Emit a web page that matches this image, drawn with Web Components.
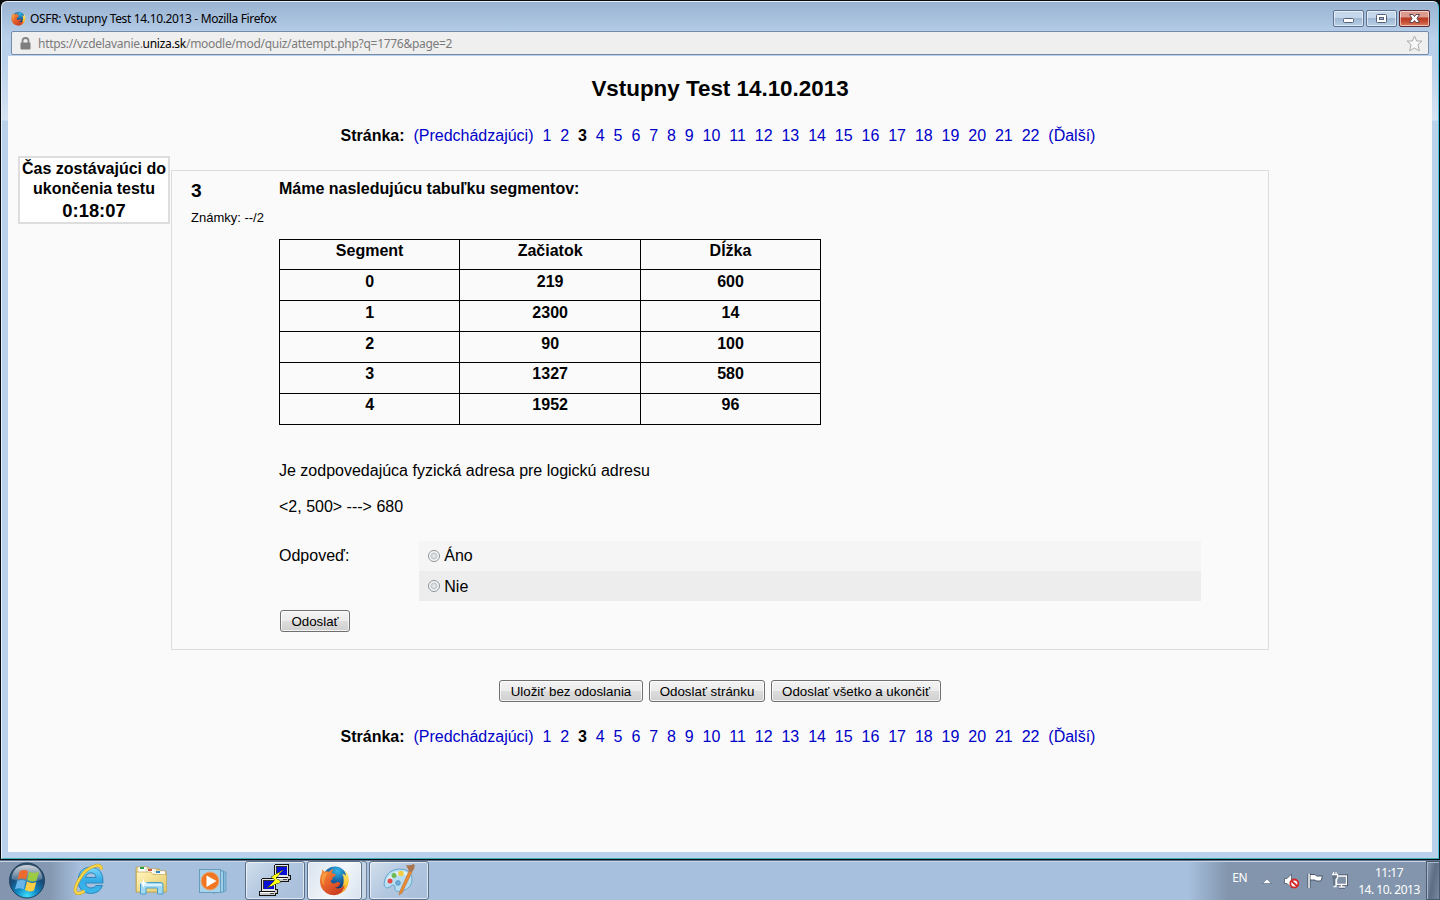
<!DOCTYPE html>
<html lang="sk">
<head>
<meta charset="utf-8">
<title>OSFR: Vstupny Test 14.10.2013</title>
<style>
html,body{margin:0;height:100%;overflow:hidden;background:#0a0d10;font-family:"Liberation Sans",Arial,sans-serif;font-size:16px;color:#000}
</style>
</head>
<body>
<desktop-shell></desktop-shell>
<script>
const define = (name, html) => customElements.define(name, class extends HTMLElement {
  constructor() {
    super();
    this.attachShadow({mode: 'open'});
  }
  connectedCallback() {
    this.shadowRoot.innerHTML = typeof html === 'function' ? html(this) : html;
  }
});

const firefox = (id) => `<svg viewBox="0 0 32 32"><defs>
<radialGradient id="${id}g" cx=".6" cy=".2" r=".8"><stop offset="0" stop-color="#35b5e8"/><stop offset=".5" stop-color="#1769a8"/><stop offset="1" stop-color="#0b2f66"/></radialGradient>
<linearGradient id="${id}f" x1="0" y1="0" x2=".7" y2="1"><stop offset="0" stop-color="#f5953a"/><stop offset=".5" stop-color="#e8642c"/><stop offset="1" stop-color="#c93a22"/></linearGradient>
<linearGradient id="${id}y" x1="0" y1="0" x2="0" y2="1"><stop offset="0" stop-color="#fff27c"/><stop offset=".6" stop-color="#f8c331"/><stop offset="1" stop-color="#e77b24"/></linearGradient></defs>
<circle cx="16.500" cy="13.500" r="12" fill="url(#${id}g)"/>
<path d="M26.500 4.500Q31 10 30.800 17Q29.500 28 18 31Q25 25 25.500 17Q26 12 24 9Q27 10 27.500 11Q28 8 26.500 4.500Z" fill="url(#${id}y)"/>
<path d="M3.300 4.500Q4.500 6 5.500 7Q8 6 10.500 7Q12.500 4.500 15 4.200Q13 6.500 13.300 8.500L17.500 9.500Q17.500 11.500 14 12.800L14 15Q12 15 12 17Q14 20 17 18.500Q20 16.500 22 18.800Q21 23 16.500 23.500Q22 26 26.500 21Q24.500 30.500 16 31.300Q6 31 2 22.500Q-.5 14 3 8Z" fill="url(#${id}f)"/>
<path d="M3 12Q4 7 10 8Q7 9 7 12Q4 17 6 22Q2 18 3 12Z" fill="#f8ad47" opacity=".65"/></svg>`;

define('caption-button', el => `<style>
:host{display:flex;box-sizing:border-box;width:31px;height:17px;border:1px solid #5d7291;border-radius:2px;box-shadow:inset 0 0 0 1px rgba(255,255,255,.55);background:linear-gradient(#c5d7eb 0 43%,#9fb7d2 47%,#b6cee7);justify-content:center}
:host([kind=close]){border-color:#5d2732;background:linear-gradient(#dc9a8e 0 40%,#b83a24 46%,#c44a30 70%,#dc8060)}
svg{width:29px;height:15px;display:block}
</style><svg viewBox="0 0 29 15">${{
min:'<rect x="9.500" y="7.500" width="10" height="4" rx="1" fill="#fff" stroke="#535f72"/>',
max:'<rect x="9.500" y="3.500" width="10" height="8" rx="1" fill="#fff" stroke="#535f72"/><rect x="12.500" y="6.500" width="4" height="2" fill="#a9bdd5" stroke="#535f72"/>',
close:'<path d="M9.500 3.500H13L14.500 5.500L16 3.500H19.500L17 7.500L19.500 11.500H16L14.500 9.500L13 11.500H9.500L12 7.500Z" fill="#fff" stroke="#5a4650"/>'
}[el.getAttribute('kind')]}</svg>`);

define('title-bar', `<style>
:host{display:flex;height:29px;align-items:flex-start;box-sizing:border-box;padding:8px 8px 0 9px}
.ico{width:15px;height:15px;margin-top:1px}.ico svg{display:block}
.t{flex:1;margin-left:4px;font:12px/18px "Noto Sans","Open Sans",sans-serif;letter-spacing:-.35px;white-space:pre}
.b{display:flex;gap:2px}
</style><div class="ico">${firefox('a')}</div><div class="t">OSFR: Vstupny Test 14.10.2013 - Mozilla Firefox</div>
<div class="b"><caption-button kind="min"></caption-button><caption-button kind="max"></caption-button><caption-button kind="close"></caption-button></div>`);

define('address-bar', `<style>
:host{display:flex;align-items:center;box-sizing:border-box;height:24px;margin:0 9px;border:1px solid #748baa;border-radius:2px;background:#efefef;padding:0 5px 0 8px;font:12px/20px "Noto Sans","Open Sans",sans-serif;color:#7b7b7b;letter-spacing:-.29px}
b{font-weight:400;color:#000}.u{flex:1;margin-left:7px;padding-top:2px;white-space:pre}
svg{display:block}
</style>
<svg width="11" height="13" viewBox="0 0 11 13"><path d="M2.500 7V4Q2.500 1 5.500 1T8.500 4V7" fill="none" stroke="#858585" stroke-width="1.800"/><rect x=".5" y="5.500" width="10" height="7" rx="1" fill="#7e7e7e"/></svg>
<div class="u">https://vzdelavanie.<b>uniza.sk</b>/moodle/mod/quiz/attempt.php?q=1776&amp;page=2</div>
<svg width="17" height="17" viewBox="0 0 17 17"><path d="M8.500 1L10.700 6H16L12 9.700L13.300 15.800L8.500 13L3.700 15.800L5 9.700L1 6H6.300Z" fill="#f7f7f7" stroke="#ababab" stroke-linejoin="round"/></svg>`);

define('page-links', () => {
  const parts = ['<b>Stránka:</b>', '<a>(Predchádzajúci)</a>'];
  for (let i = 1; i <= 22; i++) parts.push(i === 3 ? '<b>3</b>' : `<a>${i}</a>`);
  parts.push('<a>(Ďalší)</a>');
  return `<style>:host{display:block;text-align:center;line-height:18px;white-space:nowrap;padding-left:.4px}a{color:#0000c8}</style>${parts.join('&nbsp; ')}&nbsp;`;
});

define('push-button', `<style>
:host{display:inline-flex;box-sizing:border-box;height:22px;border:1px solid #707070;border-radius:3px;padding:1px 0 0;align-items:center;justify-content:center;font-size:13.333px;line-height:20px;white-space:nowrap;background:linear-gradient(#f3f3f3 0,#ebebeb 50%,#dddddd 50%,#cfcfcf);box-shadow:inset 0 0 0 1px rgba(255,255,255,.75)}
</style><slot></slot>`);

define('quiz-timer', `<style>
:host{display:block;box-sizing:border-box;width:152px;height:68px;border:2px solid #ddd;background:#fff;text-align:center;font-weight:700;line-height:20px;padding-top:1px;white-space:nowrap}
div{margin:0 -4px}.c{font-size:18.4px;line-height:23px}
</style><div>Čas zostávajúci do</div><div>ukončenia testu</div><div class="c">0:18:07</div>`);

define('segment-table', () => {
  const rows = [['Segment','Začiatok','Dĺžka'],[0,219,600],[1,2300,14],[2,90,100],[3,1327,580],[4,1952,96]];
  return `<style>
:host{display:grid;width:542px;box-sizing:border-box;grid-template-columns:180.300px 180.700px 180px;grid-auto-rows:30.830px;border-right:1px solid #000;border-bottom:1px solid #000;text-align:center;font-weight:700;line-height:18px}
div{box-sizing:border-box;border-left:1px solid #000;border-top:1px solid #000;padding-top:2.500px}
</style>${rows.flat().map(c => `<div>${c}</div>`).join('')}`;
});

define('answer-option', `<style>
:host{display:flex;box-sizing:border-box;height:30px;align-items:center;padding:0 9px;background:#f5f5f5;line-height:18px}
:host([alt]){background:#ededed}
i{box-sizing:border-box;width:12px;height:12px;border-radius:50%;border:1px solid #8f9295;background:radial-gradient(circle at 50% 50%,#e9ebec 0 8%,#bfc4c8 45%,#fafafa 56%);margin:-1px 4.300px 0 0}
:host([alt]){padding-top:1px}
</style><i></i><span><slot></slot></span>`);

define('quiz-question', `<style>
:host{display:grid;box-sizing:border-box;width:1098px;height:480px;border:1px solid #ddd;grid-template-columns:88px 1fr;padding:0 67px 0 19px}
.n{font-weight:700;font-size:19.2px;line-height:22px;margin-top:9px}
.m{font-size:13px;line-height:16px;margin-top:8px;white-space:nowrap}
.q{padding-top:9px;line-height:18px}
.h{font-weight:700;height:58.600px}
.p{margin-top:37.450px}.p2{margin-top:18px}
.a{display:grid;grid-template-columns:140px 1fr;margin-top:25px}
.l{margin-top:6px}
push-button{margin:9px 0 0 1px;width:70px}
</style>
<div><div class="n">3</div><div class="m">Známky: --/2</div></div>
<div class="q"><div class="h">Máme nasledujúcu tabuľku segmentov:</div>
<segment-table></segment-table>
<div class="p">Je zodpovedajúca fyzická adresa pre logickú adresu</div>
<div class="p2">&lt;2, 500&gt; ---&gt; 680</div>
<div class="a"><div class="l">Odpoveď:</div><div><answer-option>Áno</answer-option><answer-option alt>Nie</answer-option></div></div>
<push-button>Odoslať</push-button></div>`);

define('quiz-page', `<style>
:host{display:block;box-sizing:border-box;background:#fafafa;height:796px;margin:1px 6px 0 6px;padding-top:19px}
h2{margin:0;font-size:22.400px;line-height:28px;text-align:center;white-space:nowrap}
.top{margin-top:24px}
.row{display:flex;gap:1px;padding-left:10px;margin-top:11px;align-items:flex-start}
quiz-question{margin-top:14px}
.btns{display:flex;justify-content:center;gap:6px;margin:30px 0 26px}
</style>
<h2>Vstupny Test 14.10.2013</h2>
<page-links class="top"></page-links>
<div class="row"><quiz-timer></quiz-timer><quiz-question></quiz-question></div>
<div class="btns"><push-button style="width:144px">Uložiť bez odoslania</push-button><push-button style="width:116px">Odoslať stránku</push-button><push-button style="width:170px">Odoslať všetko a ukončiť</push-button></div>
<page-links></page-links>`);

define('browser-window', `<style>
:host{display:block;box-sizing:border-box;height:858px;margin:1px 1px 0;border:1px solid #e6f0fa;border-right-color:#4fc4da;border-bottom-color:#3fb0b8;border-radius:6px 6px 0 0;overflow:hidden;background:linear-gradient(#9ab3d0 0,#a5bedb 14px,#b8d0ea 35px,#b9d1ea 60px,#d6e3f3 118px,#b9d1ea 119px)}
</style><title-bar></title-bar><address-bar></address-bar><quiz-page></quiz-page>`);

const icons = {
orb:`<svg width="38" height="38" viewBox="0 0 38 38"><defs><radialGradient id="o" cx=".5" cy=".95" r=".85"><stop offset="0" stop-color="#3fe0ff"/><stop offset=".35" stop-color="#1089c4"/><stop offset=".7" stop-color="#174c79"/><stop offset="1" stop-color="#35536f"/></radialGradient><linearGradient id="os" x1="0" y1="0" x2="0" y2="1"><stop offset="0" stop-color="#fff" stop-opacity=".75"/><stop offset="1" stop-color="#fff" stop-opacity=".12"/></linearGradient></defs>
<circle cx="19" cy="18.500" r="17.500" fill="url(#o)" stroke="#23405d"/><path d="M3.500 17Q5 3 19 3T34.500 17Q19 24 3.500 17Z" fill="url(#os)"/>
<path d="M11.500 9.500Q15.500 7 20 9L18 17.500Q14 15.500 9.500 17.500Z" fill="#ec6a30"/><path d="M21.200 9.500Q26 12 31 9.500L28.600 18.500Q24 20.500 19.200 18Z" fill="#9acb43"/><path d="M9.200 19Q13.500 17 17.700 19L15.700 27.300Q11.500 25.200 7 27.300Z" fill="#69b5ea"/><path d="M18.900 19.500Q23.500 22 28.300 20L26 28.500Q21.500 30.500 16.900 28Z" fill="#fbce45"/></svg>`,
ie:`<svg width="34" height="34" viewBox="0 0 34 34"><defs><linearGradient id="i" x1="0" y1="0" x2="0" y2="1"><stop offset="0" stop-color="#7ddcff"/><stop offset=".5" stop-color="#35abe6"/><stop offset="1" stop-color="#3bb7ec"/></linearGradient></defs>
<path d="M31 20H13.500Q14.500 25 19 25Q22.500 25 24 22.500H30.500Q27.500 30.500 18.500 30.500Q6.500 30 6 17.500Q6.500 4.500 18.500 4Q32 5 31 20ZM13.600 14.500H24Q23.500 10 19 9.800Q14.500 10 13.600 14.500Z" fill="url(#i)" stroke="#2681b9" stroke-width=".9"/>
<path d="M29.500 6.500Q29.500 2 24.500 2.500Q14 4.500 7.500 16Q1 27 4.500 30Q7 31.500 12.500 28" fill="none" stroke="#c79b25" stroke-width="3.300"/><path d="M29.500 6.500Q29.500 2 24.500 2.500Q14 4.500 7.500 16Q1 27 4.500 30Q7 31.500 12.500 28" fill="none" stroke="#f7d84c" stroke-width="2.200"/></svg>`,
folder:`<svg width="34" height="32" viewBox="0 0 34 32"><defs><linearGradient id="d" x1="0" y1="0" x2="1" y2="1"><stop offset="0" stop-color="#fff5bd"/><stop offset="1" stop-color="#e3c765"/></linearGradient></defs>
<path d="M2 28V4Q2 3 3 3H14L16 5H25L27 7H32V28Z" fill="#edd98b" stroke="#b69a49" stroke-width=".8"/><path d="M4 3H13V9H4ZM12 5H22V11H12ZM20 7H31V12H20Z" fill="#fff" stroke="#cabb83" stroke-width=".4"/><path d="M6 3h4v2H6z" fill="#29a642"/><path d="M14 5h4v2h-4z" fill="#d1573d"/><path d="M22 7h4v2h-4z" fill="#3189ca"/>
<path d="M2.500 28V8H17L19 10.500H32.500V28Z" fill="url(#d)" stroke="#c1a753" stroke-width=".7"/><path d="M6.500 30V20Q6.500 18.500 9 18.500H26Q29 18.500 29 20V30H23.500V24H12V30Z" fill="#a2d9f2" stroke="#4b9fc7"/><path d="M8 20H28V22H8Z" fill="#d7f1fc"/><path d="M9.500 14.500L10.500 18L14 19L10.500 20L9.500 24L8.500 20L5 19L8.500 18Z" fill="#fff"/></svg>`,
media:`<svg width="30" height="28" viewBox="0 0 30 28"><path d="M18 4L28 5V24L18 25Z" fill="#86bada" stroke="#6ba2c5"/><path d="M15 3L25.500 4V25L15 26Z" fill="#9ed0ec" stroke="#5d98be"/><rect x="1.500" y="2.500" width="21" height="23" fill="#a9d3ea" stroke="#669dbf"/><circle cx="12" cy="14" r="9" fill="#f17622" stroke="#dfaa7d"/><path d="M8.500 8.500V20L18.500 14Z" fill="#fff"/></svg>`,
putty:`<svg width="32" height="32" viewBox="0 0 32 32" shape-rendering="crispEdges"><g id="pc"><path d="M15 1H16V0H30V11H32V16H30V18H13V13H15Z" fill="#111"/><path d="M16 1H29V13H16Z" fill="#e4e4e4"/><path d="M17 2H28V11H17Z" fill="#333"/><path d="M18 3H28V11H18Z" fill="#0910d5"/><path d="M14 14H29V12H31V15H29V17H14Z" fill="#c7c7c7"/><path d="M14 14h14v1h-14z" fill="#fff"/><path d="M24 15h4v1h-4z" fill="#444"/></g><use href="#pc" x="-13" y="14"/><path d="M24 6L12 13L16 16L8 24L22 18L17 14Z" fill="#ffff18" stroke="#56560a" stroke-width=".6"/></svg>`,
paint:`<svg width="33" height="32" viewBox="0 0 33 32"><path d="M3 15Q6 6 17 5Q29 5 30 14Q31 24 20 27Q12 29 13 23Q12 19 8 23Q3 26 2 20Z" fill="#b8def2" stroke="#69a7cc"/><path d="M5 15Q9 8 18 7Q26 7 28 12Q17 9 11 14Q8 17 4 18Z" fill="#def2fb"/><circle cx="8" cy="17" r="2.500" fill="#e54c48"/><circle cx="12" cy="11.500" r="2.500" fill="#6cb951"/><circle cx="19" cy="9.500" r="2.800" fill="#f2cd40"/><circle cx="16" cy="19" r="2.400" fill="#6faed9" stroke="#4487b7" stroke-width=".6"/><path d="M27 7L30 8L20 29L17 31L18 27Z" fill="#e88d35" stroke="#b9652d" stroke-width=".5"/><path d="M24 1Q28 2 32 0Q34 3 30 8L27 7Z" fill="#a9764f"/></svg>`,
mute:`<svg width="16" height="16" viewBox="0 0 16 16"><path d="M1.500 5.500H4L8.500 1V15L4 10.500H1.500Z" fill="#fff" stroke="#4b5766" stroke-width=".8"/><circle cx="11.300" cy="10.500" r="4" fill="#fff" stroke="#d22827" stroke-width="1.800"/><path d="M8.500 8L14 13" stroke="#d22827" stroke-width="1.800"/></svg>`,
flag:`<svg width="17" height="17" viewBox="0 0 17 17"><path d="M2 1.500V16" stroke="#3f4b5d" stroke-width="3"/><path d="M3 2.500H8L9.500 4H15.500L14 9H9L8 8H3Z" fill="#fff" stroke="#3f4b5d" stroke-width=".9"/><path d="M2 1.500V16" stroke="#fff" stroke-width="1.500"/></svg>`,
net:`<svg width="17" height="17" viewBox="0 0 17 17"><path d="M5 4H16V12.500H5ZM8 15H14M10.500 13V15" fill="#7f91a8" stroke="#3d4858" stroke-width="3"/><path d="M5.500 4H15.500V12.500H5.500ZM8 15H14M10.500 12.500V15" fill="#8191a5" stroke="#fff" stroke-width="1.300"/><path d="M1 2.500H6.500V6L5 7.500V14.500H2.500" fill="#65758a" stroke="#fff" stroke-width="1.300"/><path d="M2.500 0V3M5 0V3" stroke="#fff"/></svg>`
};

define('task-icon', el => `<style>:host{display:flex;flex:none;align-items:center;justify-content:center;box-sizing:border-box}
:host([open]){border:1px solid #5c6f88;border-radius:3px;background:linear-gradient(135deg,#d2dfed,#b1c6df 50%,#a8bfda);box-shadow:inset 0 0 0 1px rgba(255,255,255,.6)}
:host([active]){background:linear-gradient(120deg,#d9e3ef,#f3f6fa 55%,#d6e2ef)}svg{display:block}</style>${el.getAttribute('kind') === 'fx' ? `<div style="width:31px;height:31px">${firefox('b')}</div>` : icons[el.getAttribute('kind')]}`);

define('task-bar', `<style>
:host{display:flex;box-sizing:border-box;height:40px;margin-top:1px;border-top:1px solid #5d7087;box-shadow:inset 0 1px #c5d5e7;background:linear-gradient(90deg,#8496af 0,#8598b1 50px,#a7c0de 80px,#a7c0de 1188px,#8295ad 1228px,#8295ad);color:#fff;font:12px/17px "Noto Sans","Open Sans",sans-serif;letter-spacing:-.5px;align-items:flex-start}
task-icon{height:39px}
.orb{width:54px}.ie{width:70px;padding-bottom:1px}.fo{width:54px;padding-bottom:1px}.me{width:69px}
.pu{width:60px;margin-left:-2px;padding-bottom:1px}.fx{width:55px;margin-left:2px;padding-bottom:1px}
.st{flex:none;width:5px;height:39px;box-sizing:border-box;border:solid #70839c;border-width:1px 1px 1px 0;border-radius:0 3px 3px 0;background:#c5d5e6}
.pa{width:60px;margin-left:2px;padding:0 2px 1px 0}
.sp{flex:1}.en{margin:8px 15px 0 0}.up{flex:none;width:10px;height:6px;margin:17px 10px 0 0}
.mu{width:18px;margin-right:7px}.fl{width:17px;margin-right:7px}.ne{width:17px}
.clk{flex:none;width:74px;margin-left:3px;text-align:center;padding:3px 0 0 2px;box-sizing:border-box;white-space:nowrap}
.sd{flex:none;width:14px;margin-left:1px;height:39px;box-sizing:border-box;border:1px solid #485b71;box-shadow:inset 1px 1px #a6b7ca;background:linear-gradient(100deg,#8a9bb1,#5d6e84 50%,#77899f)}
</style>
<task-icon kind="orb" class="orb"></task-icon><task-icon kind="ie" class="ie"></task-icon><task-icon kind="folder" class="fo"></task-icon><task-icon kind="media" class="me"></task-icon>
<task-icon kind="putty" open class="pu"></task-icon><task-icon kind="fx" open active class="fx"></task-icon><div class="st"></div><task-icon kind="paint" open class="pa"></task-icon>
<div class="sp"></div><div class="en">EN</div><svg class="up" viewBox="0 0 10 6"><path d="M0 6L5 .5L10 6Z" fill="#5a6b80"/><path d="M1.200 5.200L5 1.200L8.800 5.200Z" fill="#fff"/></svg>
<task-icon kind="mute" class="mu"></task-icon><task-icon kind="flag" class="fl"></task-icon><task-icon kind="net" class="ne"></task-icon>
<div class="clk"><div>11:17</div><div>14. 10. 2013</div></div><div class="sd"></div>`);

define('desktop-shell', `<style>:host{display:flow-root;width:1440px;height:900px;overflow:hidden;background:#0a0d10}</style><browser-window></browser-window><task-bar></task-bar>`);
</script>
</body>
</html>
